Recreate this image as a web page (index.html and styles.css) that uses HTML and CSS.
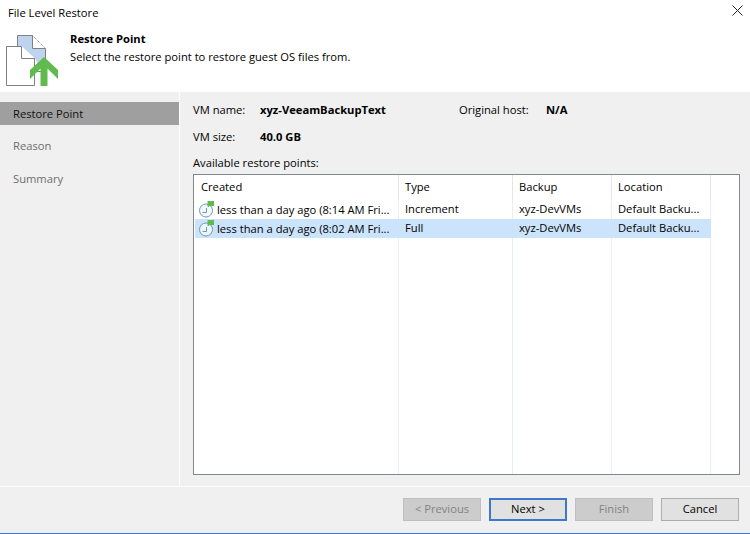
FILE: index.html
```html
<!DOCTYPE html>
<html lang="en">
<head>
    <meta charset="UTF-8">
    <title>File Level Restore</title>
    <link rel="stylesheet" href="styles.css">
</head>
<body>
    <div class="window">
        <div class="titlebar">
            <span>File Level Restore</span>
            <svg class="close" width="11" height="11" viewBox="0 0 11 11"><path d="M0.500 0.500L10.500 10.500M10.500 0.500L0.500 10.500" stroke="#222" stroke-width="1" fill="none"/></svg>
        </div>
        <div class="banner">
            <!-- drawn 1:1 with the window, offset by the banner's top edge (24px) -->
            <svg class="banner-icon" width="60" height="64" viewBox="0 24 60 64">
                <path d="M6.500 46.500H21.500L35 58.500V85.500H6.500Z" fill="#fff"/>
                <path d="M18 36H32V48H45V58L38 64L35 58.500L21.500 46H18Z" fill="#bed3ee"/>
                <path d="M17.500 46V35.500H32.500V48.500H45.500V60M36 71.500H41" fill="none" stroke="#808080"/>
                <path d="M32.500 35.500L45.500 48.500" fill="none" stroke="#808080" stroke-dasharray="1 1"/>
                <path d="M21.500 46.500H6.500V85.500H34.500V58.500M21.500 46.500V58.500H35" fill="none" stroke="#808080"/>
                <path d="M44 57L58 70V79L47.500 68.500V86H40.500V68.500L30 79V70Z" fill="#5fbb4e"/>
            </svg>
            <div class="banner-text">
                <div class="banner-title">Restore Point</div>
                <div>Select the restore point to restore guest OS files from.</div>
            </div>
        </div>
        <div class="main">
            <nav class="steps">
                <div class="step active">Restore Point</div>
                <div class="step">Reason</div>
                <div class="step">Summary</div>
            </nav>
            <section class="content">
                <div class="info-row">
                    <span class="info-label">VM name:</span>
                    <b class="info-name">xyz-VeeamBackupText</b>
                    <span class="info-label host-label">Original host:</span>
                    <b>N/A</b>
                </div>
                <div class="info-row">
                    <span class="info-label">VM size:</span>
                    <b>40.0 GB</b>
                </div>
                <div class="list-label">Available restore points:</div>
                <div class="list">
                    <div class="grid-lines">
                        <i class="col-created"></i><i class="col-type"></i><i class="col-backup"></i><i class="col-location"></i>
                    </div>
                    <div class="row head">
                        <div class="col-created">Created</div>
                        <div class="col-type">Type</div>
                        <div class="col-backup">Backup</div>
                        <div class="col-location">Location</div>
                    </div>
                    <div class="row">
                        <div class="col-created with-icon">
                            <svg width="17" height="18" viewBox="0 0 17 18"><circle cx="8" cy="9.500" r="6.500" fill="#f4f9fd" stroke="#6f9ab5"/><path d="M8.500 7V11.500H4.500" fill="none" stroke="#6f9ab5"/><path d="M9.500 0H16V5H11V6H9.500Z" fill="#5fbb4e"/></svg>
                            <span>less than a day ago (8:14 AM Fri...</span>
                        </div>
                        <div class="col-type">Increment</div>
                        <div class="col-backup">xyz-DevVMs</div>
                        <div class="col-location">Default Backu...</div>
                    </div>
                    <div class="row selected">
                        <div class="col-created with-icon">
                            <svg width="17" height="18" viewBox="0 0 17 18"><circle cx="8" cy="9.500" r="6.500" fill="#eef6fd" stroke="#6f9ab5"/><path d="M8.500 7V11.500H4.500" fill="none" stroke="#6f9ab5"/><path d="M9.500 0H16V5H11V6H9.500Z" fill="#5fbb4e"/></svg>
                            <span>less than a day ago (8:02 AM Fri...</span>
                        </div>
                        <div class="col-type">Full</div>
                        <div class="col-backup">xyz-DevVMs</div>
                        <div class="col-location">Default Backu...</div>
                    </div>
                </div>
            </section>
        </div>
        <div class="footer">
            <button class="btn" disabled>&lt; Previous</button>
            <button class="btn default">Next &gt;</button>
            <button class="btn" disabled>Finish</button>
            <button class="btn">Cancel</button>
        </div>
    </div>
</body>
</html>
```

FILE: styles.css
```css
html, body {
    margin: 0;
    padding: 0;
}

body {
    font-family: "Open Sans", "Noto Sans", sans-serif;
    font-size: 11.2px;
    color: #000;
    background: #fff;
}

.window {
    width: 750px;
    height: 534px;
    display: flex;
    flex-direction: column;
    box-sizing: border-box;
    border-bottom: 1px solid #3f78c9;
    overflow: hidden;
}

.titlebar {
    height: 24px;
    flex: none;
    display: flex;
    justify-content: space-between;
    align-items: center;
    padding: 0 7px 0 8px;
    box-sizing: border-box;
}

.close {
    align-self: flex-start;
    margin-top: 5px;
}

.banner {
    height: 68px;
    flex: none;
    display: flex;
}

.banner-icon {
    flex: none;
}

.banner-text {
    margin: 6px 0 0 10px;
    line-height: 18px;
}

.banner-title {
    font-weight: 700;
}

.main {
    height: 395px;
    flex: none;
    display: flex;
    background: #f0f0f0;
    border-bottom: 1px solid #fff;
    box-sizing: border-box;
}

.steps {
    width: 180px;
    box-sizing: border-box;
    flex: none;
    padding-top: 10px;
    border-right: 1px solid #fff;
}

.step {
    height: 23px;
    line-height: 21px;
    padding-left: 13px;
    margin-bottom: 10px;
    color: #6d6d6d;
}

.step.active {
    background: #9f9f9f;
    color: #111;
    line-height: 23px;
}

.content {
    flex: 1;
    padding: 8px 10px 11px 13px;
    display: flex;
    flex-direction: column;
}

.info-row {
    height: 27px;
    line-height: 20px;
    display: flex;
}

.info-label {
    width: 67px;
}

.info-name {
    width: 199px;
}

.host-label {
    width: 87px;
}

.list-label {
    height: 20px;
    line-height: 18px;
}

.list {
    flex: 1;
    position: relative;
    background: #fff;
    border: 1px solid #828790;
    padding-left: 1px;
}

.row {
    display: flex;
    height: 19px;
    line-height: 18px;
    width: 516px;
    position: relative;
}

.row.head {
    height: 25px;
    line-height: 24px;
}

.row.selected {
    background: #cce4fb;
}

.col-created,
.col-type,
.col-backup,
.col-location {
    box-sizing: border-box;
    white-space: nowrap;
}

.col-created { width: 204px; padding-left: 6px; }
.col-type { width: 114px; padding-left: 6px; }
.col-backup { width: 99px; padding-left: 6px; }
.col-location { width: 99px; padding-left: 6px; }

.head > div {
    border-right: 1px solid #e5e5e5;
}

.with-icon {
    display: flex;
    align-items: center;
    gap: 2px;
    padding-left: 3px;
}

.with-icon svg {
    flex: none;
}

/* column separators run the full height of the list */
.grid-lines {
    position: absolute;
    top: 0;
    bottom: 0;
    left: 1px;
    display: flex;
}

.grid-lines i {
    display: block;
    box-sizing: border-box;
    border-right: 1px solid #e6eef8;
}

.footer {
    flex: 1;
    display: flex;
    justify-content: flex-end;
    align-items: flex-start;
    gap: 8px;
    padding: 11px 11px 0 0;
    background: #f0f0f0;
}

.btn {
    width: 78px;
    height: 23px;
    padding: 0 0 2px;
    box-sizing: border-box;
    font-family: inherit;
    font-size: 11.2px;
    background: #e1e1e1;
    border: 1px solid #adadad;
    color: #000;
}

.btn:disabled {
    background: #cccccc;
    border-color: #bfbfbf;
    color: #838383;
}

.btn.default {
    border: 2px solid #3f78c9;
}
```
